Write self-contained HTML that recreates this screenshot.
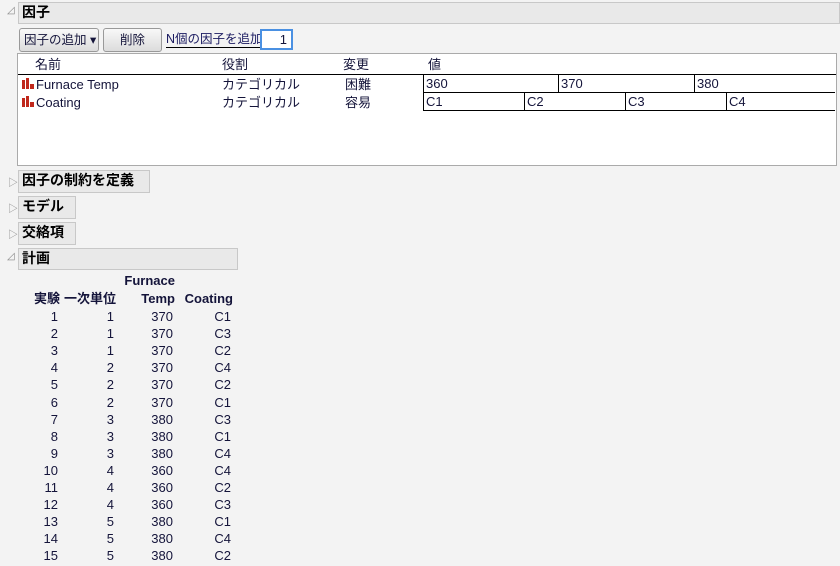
<!DOCTYPE html>
<html><head><meta charset="utf-8"><style>
*{margin:0;padding:0;box-sizing:border-box}
body{width:840px;height:566px;background:#f3f3f3;font-family:"Liberation Sans","Noto Sans CJK JP",sans-serif;font-size:13px;color:#14143a;position:relative;overflow:hidden}
.a{position:absolute;white-space:nowrap;line-height:16px}
.hdr{position:absolute;background:#e9e9e9;border:1px solid #c8c8c8;font-weight:bold;font-size:14px;padding-left:3px;line-height:19px;color:#000}
.tri{position:absolute;font-size:10px;color:#888}
.btn{position:absolute;border:1px solid #999;border-radius:3px;background:linear-gradient(#f8f8f8,#dcdcdc);height:24px;line-height:22px;font-size:12.5px;padding-left:4px}
.cell{position:absolute;border-left:1px solid #000;border-bottom:1px solid #000;height:18px;line-height:17px;padding-left:2px;color:#14143a}
.ic{position:absolute;width:12px;height:11px}
.r{position:absolute;text-align:right;width:60px;line-height:16px;white-space:nowrap}
</style></head><body>
<div class="tri" style="left:7px;top:5px">◿</div>
<div class="hdr" style="left:18px;top:2px;width:822px;height:22px">因子</div>
<div class="btn" style="left:19px;top:28px;width:80px">因子の追加 ▾</div>
<div class="btn" style="left:103px;top:28px;width:59px;text-align:center;padding:0">削除</div>
<div class="a" style="left:166px;top:31px;width:94px;overflow:hidden;border-bottom:1px solid #000;color:#1a1a60;font-size:12.5px">N個の因子を追加</div>
<div class="a" style="left:260px;top:29px;width:33px;height:21px;border:2px solid #4a90e2;background:#fff;text-align:right;padding-right:4px;line-height:17px">1</div>
<div class="a" style="left:17px;top:53px;width:820px;height:113px;background:#fff;border:1px solid #aaa"></div>
<div class="a" style="left:35px;top:57px">名前</div>
<div class="a" style="left:222px;top:57px">役割</div>
<div class="a" style="left:343px;top:57px">変更</div>
<div class="a" style="left:428px;top:57px">値</div>
<div class="a" style="left:18px;top:74px;width:818px;border-top:1px solid #000"></div>
<svg class="ic" style="left:22px;top:78px" viewBox="0 0 12 11"><path d="M0 2h3v9H0zM4 0h3v11H4zM8 6h4v5H8z" fill="#c0281c"/></svg>
<svg class="ic" style="left:22px;top:96px" viewBox="0 0 12 11"><path d="M0 2h3v9H0zM4 0h3v11H4zM8 6h4v5H8z" fill="#c0281c"/></svg>
<div class="a" style="left:36px;top:77px">Furnace Temp</div>
<div class="a" style="left:36px;top:95px">Coating</div>
<div class="a" style="left:222px;top:77px">カテゴリカル</div>
<div class="a" style="left:222px;top:95px">カテゴリカル</div>
<div class="a" style="left:345px;top:77px">困難</div>
<div class="a" style="left:345px;top:95px">容易</div>
<div class="cell" style="left:423px;top:75px;width:135px">360</div>
<div class="cell" style="left:558px;top:75px;width:136px">370</div>
<div class="cell" style="left:694px;top:75px;width:141px">380</div>
<div class="cell" style="left:423px;top:93px;width:101px">C1</div>
<div class="cell" style="left:524px;top:93px;width:101px">C2</div>
<div class="cell" style="left:625px;top:93px;width:101px">C3</div>
<div class="cell" style="left:726px;top:93px;width:109px">C4</div>
<div class="tri" style="left:8px;top:174px">▷</div>
<div class="hdr" style="left:18px;top:170px;width:132px;height:23px">因子の制約を定義</div>
<div class="tri" style="left:8px;top:200px">▷</div>
<div class="hdr" style="left:18px;top:196px;width:58px;height:23px">モデル</div>
<div class="tri" style="left:8px;top:226px">▷</div>
<div class="hdr" style="left:18px;top:222px;width:58px;height:23px">交絡項</div>
<div class="tri" style="left:7px;top:251px">◿</div>
<div class="hdr" style="left:18px;top:248px;width:220px;height:22px">計画</div>
<div style="font-weight:bold">
<div class="r" style="left:115px;top:273px">Furnace</div>
<div class="r" style="left:0px;top:291px">実験</div>
<div class="r" style="left:56px;top:291px">一次単位</div>
<div class="r" style="left:115px;top:291px">Temp</div>
<div class="r" style="left:173px;top:291px">Coating</div>
</div>
<div id="rows"></div>
<script>
var d=[[1,370,'C1'],[1,370,'C3'],[1,370,'C2'],[2,370,'C4'],[2,370,'C2'],[2,370,'C1'],[3,380,'C3'],[3,380,'C1'],[3,380,'C4'],[4,360,'C4'],[4,360,'C2'],[4,360,'C3'],[5,380,'C1'],[5,380,'C4'],[5,380,'C2']];
var h='';d.forEach(function(r,i){var t=309+i*17.1;
h+='<div class="r" style="left:-2px;top:'+t+'px">'+(i+1)+'</div><div class="r" style="left:54px;top:'+t+'px">'+r[0]+'</div><div class="r" style="left:113px;top:'+t+'px">'+r[1]+'</div><div class="r" style="left:171px;top:'+t+'px">'+r[2]+'</div>';});
document.getElementById('rows').innerHTML=h;
</script>
</body></html>
